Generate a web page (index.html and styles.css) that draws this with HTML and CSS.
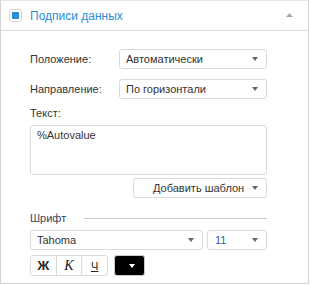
FILE: index.html
```html
<!DOCTYPE html>
<html>
<head>
<meta charset="utf-8">
<link rel="stylesheet" href="styles.css">
</head>
<body>
<div class="panel">
  <div class="header">
    <span class="check"><span class="check-inner"></span></span>
    <span class="title">Подписи данных</span>
    <svg class="collapse" width="7" height="4" viewBox="0 0 7 4"><path d="M0 4 L3.5 0 L7 4 Z" fill="#a8a8a8"/></svg>
  </div>
  <div class="body">
    <div class="row">
      <span class="label">Положение:</span>
      <div class="select wide"><span>Автоматически</span><i class="arrow"></i></div>
    </div>
    <div class="row">
      <span class="label">Направление:</span>
      <div class="select wide"><span>По горизонтали</span><i class="arrow"></i></div>
    </div>
    <div class="label text-label">Текст:</div>
    <div class="textarea">%Autovalue</div>
    <div class="btn-row">
      <div class="select add"><span>Добавить шаблон</span><i class="arrow"></i></div>
    </div>
    <div class="group-title"><span>Шрифт</span><span class="line"></span></div>
    <div class="font-row">
      <div class="select font"><span>Tahoma</span><i class="arrow"></i></div>
      <div class="select size"><span class="size-val">11</span><i class="arrow"></i></div>
    </div>
    <div class="style-row">
      <div class="seg">
        <span class="sb bold">Ж</span>
        <span class="sb ital">К</span>
        <span class="sb under">Ч</span>
      </div>
      <div class="color"><i class="arrow white"></i></div>
    </div>
  </div>
</div>
</body>
</html>
```

FILE: styles.css
```css
* { box-sizing: border-box; }
body {
  margin: 0;
  background: #fff;
  font-family: "Liberation Sans", Arial, sans-serif;
  font-size: 11px;
  color: #333;
}
.panel {
  width: 309px;
  height: 284px;
  border: 1px solid #d2d2d2;
  border-top-color: #e6e6e6;
  background: #fff;
}
.header {
  height: 30px;
  border-bottom: 1px solid #dcdcdc;
  display: flex;
  align-items: center;
  padding-left: 8px;
  padding-right: 15px;
}
.check {
  width: 13px;
  height: 13px;
  border: 1px solid #d6d6d6;
  border-radius: 3px;
  display: flex;
  align-items: center;
  justify-content: center;
  background: #fff;
}
.check-inner {
  width: 7px;
  height: 7px;
  background: #2b8ed4;
}
.title {
  margin-left: 8px;
  color: #2b8ed4;
  font-size: 12px;
  flex: 1;
}
.collapse { display: block; margin-top: -1px; }
.body {
  padding: 18px 0 0 29px;
}
.row {
  display: flex;
  align-items: center;
  height: 20px;
  margin-bottom: 10px;
}
.row .label { width: 89px; }
.select {
  height: 20px;
  border: 1px solid #dadada;
  border-radius: 3px;
  display: flex;
  align-items: center;
  padding: 0 8px 0 6px;
  background: #fff;
}
.select span { flex: 1; white-space: nowrap; }
.wide { width: 148px; }
.arrow {
  width: 0;
  height: 0;
  border-left: 3.5px solid transparent;
  border-right: 3.5px solid transparent;
  border-top: 4px solid #666;
}
.arrow.white { border-top-color: #fff; }
.text-label { margin-top: -4px; height: 16px; line-height: 16px; }
.textarea {
  margin-top: 4px;
  width: 237px;
  height: 50px;
  border: 1px solid #dadada;
  border-radius: 3px;
  padding: 3px 6px;
}
.btn-row {
  display: flex;
  justify-content: flex-end;
  width: 237px;
  margin-top: 3px;
}
.add { width: 134px; padding-left: 19px; }
.group-title {
  display: flex;
  align-items: center;
  width: 237px;
  margin-top: 12px;
  height: 16px;
}
.group-title span:first-child { color: #3a3f5a; }
.line {
  flex: 1;
  height: 1px;
  background: #c8c8c8;
  margin-left: 18px;
  margin-top: 1px;
}
.font-row {
  display: flex;
  margin-top: 4px;
  width: 237px;
  justify-content: space-between;
}
.font { width: 173px; }
.size { width: 60px; padding-left: 7px; }
.size-val { color: #3a5ba8; }
.style-row {
  display: flex;
  margin-top: 5px;
  align-items: center;
}
.seg {
  display: flex;
  height: 21px;
  border: 1px solid #dadada;
  border-radius: 3px;
  width: 78px;
}
.sb {
  flex: 1;
  display: flex;
  align-items: center;
  justify-content: center;
  color: #222;
}
.sb + .sb { border-left: 1px solid #dadada; }
.bold { font-weight: bold; font-size: 13px; }
.ital { font-family: "Liberation Serif", serif; font-style: italic; font-size: 14px; }
.under { text-decoration: underline; font-size: 11px; }
.color {
  margin-left: 6px;
  width: 31px;
  height: 21px;
  background: #000;
  border: 1px solid #ccc;
  border-radius: 3px;
  display: flex;
  align-items: center;
  justify-content: center;
  padding-left: 4px;
}
```
